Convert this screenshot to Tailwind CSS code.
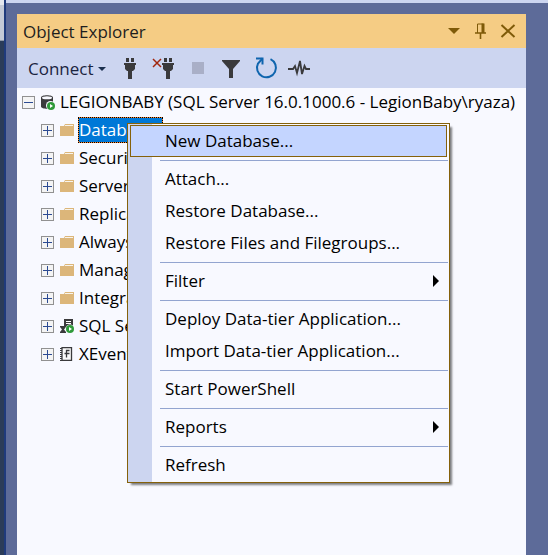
<!DOCTYPE html>
<html lang="en">
<head>
<meta charset="utf-8">
<title>Object Explorer</title>
<script src="https://cdn.jsdelivr.net/npm/@tailwindcss/browser@4"></script>
</head>
<body class="flex min-h-screen bg-[#5d6b99] font-['Open_Sans','Noto_Sans',sans-serif] text-[17px] leading-6 text-black">
<svg class="hidden">
  <symbol id="plus" viewBox="0 0 13 13"><rect x=".5" y=".5" width="12" height="12" fill="#f4f4f4" stroke="#919191"/><path d="M2 6.5h9M6.500 2v9" stroke="#2b4a92"/></symbol>
  <symbol id="folder" viewBox="0 0 14 12"><path d="M0 2h4l1-2h9v12H0z" fill="#dcb67a"/><path d="M5 1.500h8" stroke="#f8f4ec"/></symbol>
  <symbol id="plug" viewBox="0 0 12 21"><path d="M2 0h3v4H2zM7 0h3v4H7zM0 5h12v2h-1v4l-2 2H8v8H4v-8H3l-2-2V7H0z" fill="#3a3a3c"/></symbol>
  <symbol id="play" viewBox="0 0 8 8"><circle cx="4" cy="4" r="4" fill="#2f9a3a"/><path d="M3 2l3 2-3 2z" fill="#fff"/></symbol>
</svg>

<aside class="flex w-[6px] shrink-0 flex-col border-r-2 border-[#1f3a7c] bg-[#2b3c59]">
  <div class="h-[5px] bg-[#e4e7ee]"></div>
  <div class="h-9 border-b border-[#8f98a8] bg-[#c3c9d6]"></div>
</aside>

<main class="flex min-w-0 grow flex-col border-t-[3px] border-[#ccd5f0] pt-[11px] pr-[22px] pl-[11px]">
  <header class="flex h-[34px] shrink-0 items-center bg-[#f5cc84] pr-2.5 pl-1.5 text-[#1e1e1e]">
    <h1 class="grow pt-0.5">Object Explorer</h1>
    <div class="flex items-center gap-3.5 text-[#7f5a08]">
      <button aria-label="Window position"><svg class="block h-4 w-3" viewBox="0 0 12 16"><path d="M0 5h12l-6 6z" fill="currentColor"/></svg></button>
      <button aria-label="Auto hide"><svg class="block h-4 w-3" viewBox="0 0 12 16" fill="none" stroke="currentColor"><path d="M3.500 10V1h6"/><path d="M9 .5V10" stroke-width="3"/><path d="M1 10h11M6.500 10v6" stroke-width="1.600"/></svg></button>
      <button aria-label="Close"><svg class="block h-4 w-4" viewBox="0 0 16 16"><path d="M1.500 2l13 12M14.500 2l-13 12" fill="none" stroke="currentColor" stroke-width="2"/></svg></button>
    </div>
  </header>

  <div class="flex h-10 shrink-0 items-center bg-[#ccd5f0] pl-[11px] text-[#1b2440]" role="toolbar">
    <button class="flex items-center gap-1 pt-0.5">Connect <svg class="h-2 w-2" viewBox="0 0 8 8"><path d="M0 2h8L4 6z" fill="#1b2f4e"/></svg></button>
    <div class="ml-[18px] flex items-center gap-[18px]">
      <button aria-label="Connect"><svg class="block h-[21px] w-3"><use href="#plug"/></svg></button>
      <button class="-ml-0.5 flex items-start" aria-label="Disconnect"><svg class="h-[10px] w-[10px]" viewBox="0 0 10 10"><path d="M1 1l8 8M9 1L1 9" stroke="#a1260d" stroke-width="1.500"/></svg><svg class="h-[21px] w-3"><use href="#plug"/></svg></button>
      <button aria-label="Stop"><svg class="block h-3 w-3" viewBox="0 0 12 12"><path d="M0 0h12v12H0z" fill="#a9afc7"/></svg></button>
      <button class="pt-0.5" aria-label="Filter"><svg class="block h-[18px] w-[18px]" viewBox="0 0 18 18"><path d="M0 0h18v1l-7 8v9H7V9L0 1z" fill="#3a3a3c"/></svg></button>
      <button class="-ml-1" aria-label="Refresh"><svg class="block h-6 w-6" viewBox="0 0 24 24" fill="none" stroke="#0f65ae" stroke-width="2"><path d="M16.500 3.200A9.500 9.500 0 1 1 4 7.500L8.500 2.500"/><path d="M2 2.500h6.500V8.500"/></svg></button>
      <button class="-ml-2" aria-label="Activity Monitor"><svg class="block h-[18px] w-[22px]" viewBox="0 0 22 18"><path d="M0 10h5l2-3 2 7 3-12 2 13 2.500-8 1.500 3h4" fill="none" stroke="#3a3a3c" stroke-width="1.800"/></svg></button>
    </div>
  </div>

  <section class="relative grow bg-[#f8f9ff]">
    <ul class="whitespace-nowrap">
      <li class="flex h-7 items-center pl-[5px]">
        <svg class="h-[13px] w-[13px]" viewBox="0 0 13 13"><rect x=".5" y=".5" width="12" height="12" fill="#f4f4f4" stroke="#919191"/><path d="M2 6.500h9" stroke="#2b4a92"/></svg>
        <svg class="ml-1.5 h-[15px] w-[14px]" viewBox="0 0 14 15"><path d="M0 2.500C0-.5 12-.5 12 2.500v9c0 3-12 3-12 0z" fill="#3a3a3c"/><ellipse cx="6" cy="2.800" rx="5" ry="1.500" fill="#f8f9ff"/><circle cx="9.500" cy="10.500" r="4.500" fill="#f8f9ff"/><use href="#play" x="6" y="7" width="8" height="8"/></svg>
        <span class="ml-[5px]">LEGIONBABY (SQL Server 16.0.1000.6 - LegionBaby\ryaza)</span>
      </li>
      <li class="flex h-7 items-center pl-6"><svg class="h-[13px] w-[13px]"><use href="#plus"/></svg><svg class="ml-1.5 mr-1 h-3 w-[14px]"><use href="#folder"/></svg><span class="flex border border-dotted border-black bg-[#ff8728]"><span class="bg-[#0078d7] text-white">Databases</span></span></li>
      <li class="flex h-7 items-center pl-6"><svg class="h-[13px] w-[13px]"><use href="#plus"/></svg><svg class="ml-1.5 mr-[5px] h-3 w-[14px]"><use href="#folder"/></svg><span>Security</span></li>
      <li class="flex h-7 items-center pl-6"><svg class="h-[13px] w-[13px]"><use href="#plus"/></svg><svg class="ml-1.5 mr-[5px] h-3 w-[14px]"><use href="#folder"/></svg><span>Server Objects</span></li>
      <li class="flex h-7 items-center pl-6"><svg class="h-[13px] w-[13px]"><use href="#plus"/></svg><svg class="ml-1.5 mr-[5px] h-3 w-[14px]"><use href="#folder"/></svg><span>Replication</span></li>
      <li class="flex h-7 items-center pl-6"><svg class="h-[13px] w-[13px]"><use href="#plus"/></svg><svg class="ml-1.5 mr-[5px] h-3 w-[14px]"><use href="#folder"/></svg><span>Always On High Availability</span></li>
      <li class="flex h-7 items-center pl-6"><svg class="h-[13px] w-[13px]"><use href="#plus"/></svg><svg class="ml-1.5 mr-[5px] h-3 w-[14px]"><use href="#folder"/></svg><span>Management</span></li>
      <li class="flex h-7 items-center pl-6"><svg class="h-[13px] w-[13px]"><use href="#plus"/></svg><svg class="ml-1.5 mr-[5px] h-3 w-[14px]"><use href="#folder"/></svg><span>Integration Services Catalogs</span></li>
      <li class="flex h-7 items-center pl-6"><svg class="h-[13px] w-[13px]"><use href="#plus"/></svg><svg class="ml-1.5 mr-[5px] h-[14px] w-[14px]" viewBox="0 0 14 14"><path d="M4 0h9v8H4zM0 7h6v1L4 10.500 6 13v1H0v-1l2-2.500L0 8z" fill="#3a3a3c"/><path d="M6 2.500h5M6 4.500h5" stroke="#fff"/><circle cx="10" cy="10" r="4.500" fill="#f8f9ff"/><use href="#play" x="6" y="6" width="8" height="8"/></svg><span>SQL Server Agent</span></li>
      <li class="flex h-7 items-center pl-6"><svg class="h-[13px] w-[13px]"><use href="#plus"/></svg><svg class="ml-1.5 mr-[5px] h-[14px] w-[14px]" viewBox="0 0 14 14"><path d="M2 .7h9.500v12.600H2z" fill="#fafafa" stroke="#3a3a3c" stroke-width="1.300"/><path d="M1 1v13" stroke="#3a3a3c" stroke-width="2" stroke-dasharray="1 1"/><path d="M9.500 3.500H6.500v3M4.500 6.500h5M6.500 6.500v4" fill="none" stroke="#3a3a3c" stroke-width="1.300"/></svg><span>XEvent Profiler</span></li>
    </ul>

    <div role="menu" class="absolute top-[35px] left-[110px] flex w-[323px] flex-col border border-[#85610b] bg-[linear-gradient(to_right,#ccd5f0_24px,#f8f9ff_24px)] pt-px pb-px shadow-[3px_3px_2px_-1px_rgba(0,0,0,0.5)]">
      <button role="menuitem" class="mx-0.5 flex h-8 items-center border border-[#85610b] bg-[#c4d5ff] pl-[34px]">New Database...</button>
      <hr class="mt-[3px] mr-px mb-0.5 ml-8 h-px border-0 bg-[#93a5d0]">
      <button role="menuitem" class="flex h-8 items-center pl-[37px]">Attach...</button>
      <button role="menuitem" class="flex h-8 items-center pl-[37px]">Restore Database...</button>
      <button role="menuitem" class="flex h-8 items-center pl-[37px]">Restore Files and Filegroups...</button>
      <hr class="mt-[3px] mr-px mb-0.5 ml-8 h-px border-0 bg-[#93a5d0]">
      <button role="menuitem" class="flex h-8 items-center justify-between pr-2.5 pl-[37px]">Filter <svg class="h-3 w-1.5" viewBox="0 0 6 12"><path d="M0 0l6 6-6 6z"/></svg></button>
      <hr class="mt-[3px] mr-px mb-0.5 ml-8 h-px border-0 bg-[#93a5d0]">
      <button role="menuitem" class="flex h-8 items-center pl-[37px]">Deploy Data-tier Application...</button>
      <button role="menuitem" class="flex h-8 items-center pl-[37px]">Import Data-tier Application...</button>
      <hr class="mt-[3px] mr-px mb-0.5 ml-8 h-px border-0 bg-[#93a5d0]">
      <button role="menuitem" class="flex h-8 items-center pl-[37px]">Start PowerShell</button>
      <hr class="mt-[3px] mr-px mb-0.5 ml-8 h-px border-0 bg-[#93a5d0]">
      <button role="menuitem" class="flex h-8 items-center justify-between pr-2.5 pl-[37px]">Reports <svg class="h-3 w-1.5" viewBox="0 0 6 12"><path d="M0 0l6 6-6 6z"/></svg></button>
      <hr class="mt-[3px] mr-px mb-0.5 ml-8 h-px border-0 bg-[#93a5d0]">
      <button role="menuitem" class="flex h-8 items-center pl-[37px]">Refresh</button>
    </div>
  </section>
</main>
</body>
</html>
